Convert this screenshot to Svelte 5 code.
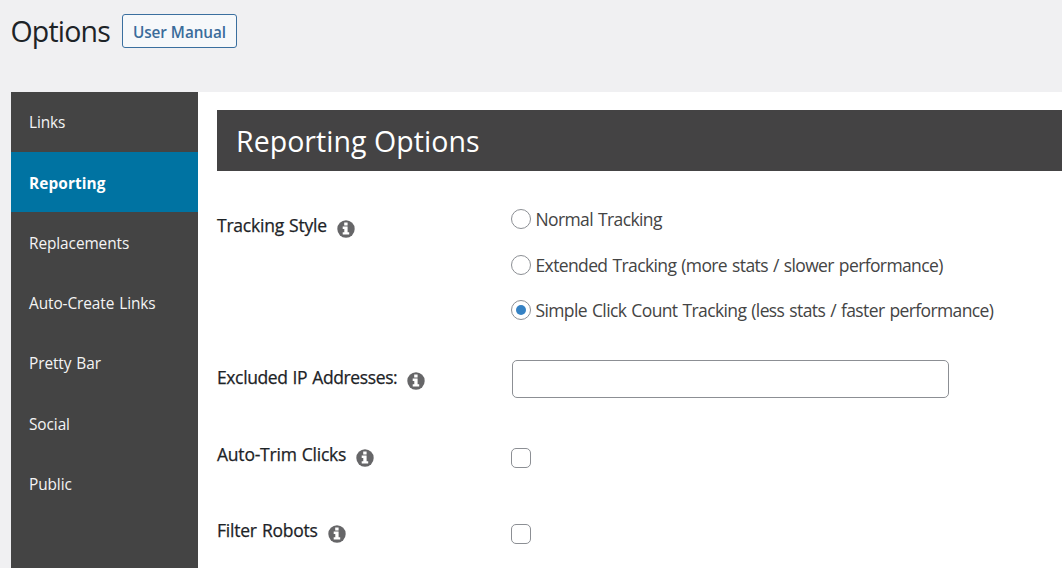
<script>
  const tabs = [
    { id: 'links', title: 'Links' },
    { id: 'reporting', title: 'Reporting' },
    { id: 'replacements', title: 'Replacements' },
    { id: 'auto-create', title: 'Auto-Create Links' },
    { id: 'pretty-bar', title: 'Pretty Bar' },
    { id: 'social', title: 'Social' },
    { id: 'public', title: 'Public' },
  ];

  const trackingStyles = [
    { value: 'normal', label: 'Normal Tracking' },
    { value: 'extended', label: 'Extended Tracking (more stats / slower performance)' },
    { value: 'count', label: 'Simple Click Count Tracking (less stats / faster performance)' },
  ];

  let active = $state('reporting');
  let tracking = $state('count');
  let excludedIps = $state('');
  let autoTrim = $state(false);
  let filterRobots = $state(false);
</script>

{#snippet info()}
  <svg class="info" viewBox="0 0 18 18" width="18" height="18">
    <circle cx="9" cy="9" r="8.7" fill="#666668" />
    <path d="M7.2 2.6h3.4v2.8H7.2zM5.7 6.6h4.9v5.6h1.6v2.4H5.7v-2.4h1.6V8.9H5.7z" fill="#fff" />
  </svg>
{/snippet}

<div class="page">
  <header>
    <h1>Options</h1>
    <a class="manual" href="#manual">User Manual</a>
  </header>

  <div class="panel">
    <nav>
      {#each tabs as tab (tab.id)}
        <button class="tab" class:active={active === tab.id} onclick={() => (active = tab.id)}>
          {tab.title}
        </button>
      {/each}
    </nav>

    <main>
      <h2>Reporting Options</h2>

      <div class="row row-tracking">
        <div class="label"><span>Tracking Style</span>{@render info()}</div>
        <div class="choices">
          {#each trackingStyles as style (style.value)}
            <label class="choice">
              <input type="radio" name="tracking" value={style.value} bind:group={tracking} />
              <span>{style.label}</span>
            </label>
          {/each}
        </div>
      </div>

      <div class="row row-ips">
        <div class="label"><span>Excluded IP Addresses:</span>{@render info()}</div>
        <input type="text" aria-label="Excluded IP Addresses" bind:value={excludedIps} />
      </div>

      <div class="row row-trim">
        <div class="label"><span>Auto-Trim Clicks</span>{@render info()}</div>
        <input type="checkbox" aria-label="Auto-Trim Clicks" bind:checked={autoTrim} />
      </div>

      <div class="row row-robots">
        <div class="label"><span>Filter Robots</span>{@render info()}</div>
        <input type="checkbox" aria-label="Filter Robots" bind:checked={filterRobots} />
      </div>
    </main>
  </div>
</div>

<style>
  :global(body) {
    background: #f0f0f2;
    overflow: hidden;
  }

  .page {
    display: flex;
    flex-direction: column;
    box-sizing: border-box;
    height: 568px;
    padding-left: 11px;
    overflow: hidden;
    font-family: 'Open Sans', 'Noto Sans', sans-serif;
    color: #1d2327;
  }

  header {
    display: flex;
    align-items: flex-start;
    gap: 11px;
    height: 92px;
    flex: none;
  }

  h1 {
    width: 100px;
    margin: 11px 0 0;
    font-size: 28.5px;
    font-weight: 400;
    line-height: 40px;
    letter-spacing: -0.8px;
    text-indent: -0.5px;
    white-space: nowrap;
  }

  .manual {
    box-sizing: border-box;
    width: 115px;
    height: 34px;
    margin-top: 14px;
    border: 1px solid #3a6f9f;
    border-radius: 3px;
    background: #f6f8fa;
    color: #3b6c9a;
    font-size: 15.3px;
    font-weight: 600;
    line-height: 34px;
    letter-spacing: -0.05px;
    text-align: center;
    text-decoration: none;
    white-space: nowrap;
  }

  .panel {
    display: flex;
    flex: 1;
    background: #fff;
  }

  nav {
    display: flex;
    flex-direction: column;
    width: 187px;
    flex: none;
    background: #444;
  }

  .tab {
    height: 60.2px;
    padding: 2px 0 0 18px;
    border: none;
    background: none;
    color: #f4f4f4;
    font-family: inherit;
    font-size: 15.4px;
    letter-spacing: -0.08px;
    word-spacing: 1px;
    text-align: left;
    cursor: pointer;
  }

  .tab:first-child {
    padding-top: 0;
  }

  .tab.active {
    background: #0073a2;
    color: #fff;
    font-weight: 700;
    letter-spacing: 0.1px;
  }

  main {
    flex: 1;
    padding: 18px 0 0 19px;
  }

  h2 {
    height: 61px;
    margin: 0;
    padding-left: 19px;
    background: #444344;
    color: #fff;
    font-size: 28.5px;
    font-weight: 400;
    line-height: 62px;
    letter-spacing: 0.05px;
  }

  .row {
    display: flex;
    align-items: flex-start;
    box-sizing: border-box;
  }

  .label {
    display: flex;
    align-items: flex-start;
    gap: 10px;
    width: 294px;
    flex: none;
    font-size: 17.5px;
    line-height: 24px;
    letter-spacing: -0.22px;
    word-spacing: 0.8px;
    white-space: nowrap;
    -webkit-text-stroke: 0.25px currentColor;
  }

  .label span {
    margin-top: -1px;
  }

  .info {
    margin-top: 6px;
  }

  .row-tracking {
    height: 152px;
    padding-top: 38px;
  }

  .row-tracking .label {
    padding-top: 5px;
  }

  .choices {
    display: flex;
    flex-direction: column;
    gap: 25.5px;
  }

  .choice {
    display: flex;
    align-items: center;
    gap: 4.5px;
    height: 20px;
    color: #444;
    font-size: 17.5px;
    letter-spacing: -0.62px;
    word-spacing: 1.1px;
    white-space: nowrap;
  }

  .row-ips {
    height: 120px;
    padding-top: 37px;
  }

  .row-ips .label {
    width: 295px;
    padding-top: 6px;
    letter-spacing: -0.38px;
  }

  .row-trim {
    height: 76px;
  }

  input {
    box-sizing: border-box;
    appearance: none;
    margin: 0;
    border: 1px solid #8c8f94;
    background: #fff;
  }

  input[type='text'] {
    width: 437px;
    height: 38px;
    padding: 0 10px;
    border-radius: 5px;
    font: inherit;
    font-size: 17px;
  }

  input[type='radio'],
  input[type='checkbox'] {
    width: 20px;
    height: 20px;
    flex: none;
  }

  input[type='radio'] {
    display: grid;
    place-items: center;
    border-radius: 50%;
  }

  input[type='radio']:checked::before {
    content: '';
    width: 10px;
    height: 10px;
    border-radius: 50%;
    background: #3582c4;
  }

  input[type='checkbox'] {
    margin-top: 5px;
    border-radius: 5px;
  }

  input[type='checkbox']:checked {
    background: #3582c4;
  }
</style>
